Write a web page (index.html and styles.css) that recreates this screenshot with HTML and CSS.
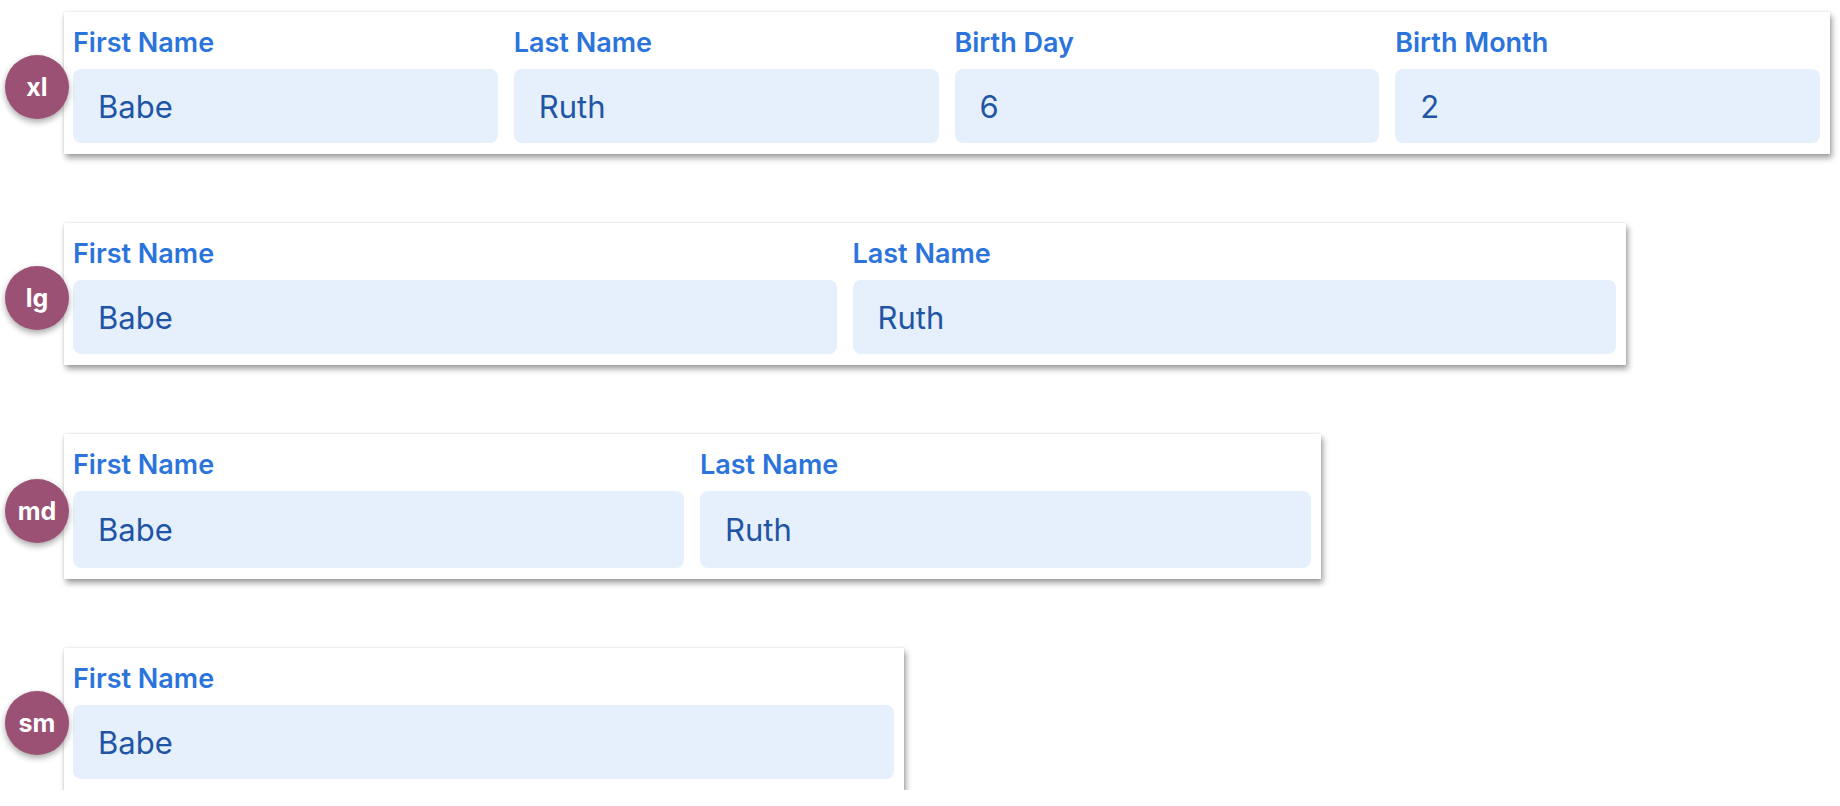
FILE: index.html
```html
<!DOCTYPE html>
<html lang="en">
<head>
<meta charset="utf-8">
<title>Responsive form</title>
<link rel="stylesheet" href="styles.css">
</head>
<body>
<main class="page">
  <section class="row">
    <span class="badge">xl</span>
    <div class="card card-xl">
      <div class="field"><span class="label">First Name</span><div class="input">Babe</div></div>
      <div class="field"><span class="label">Last Name</span><div class="input">Ruth</div></div>
      <div class="field"><span class="label">Birth Day</span><div class="input">6</div></div>
      <div class="field"><span class="label">Birth Month</span><div class="input">2</div></div>
    </div>
  </section>
  <section class="row">
    <span class="badge">lg</span>
    <div class="card card-lg">
      <div class="field"><span class="label">First Name</span><div class="input">Babe</div></div>
      <div class="field"><span class="label">Last Name</span><div class="input">Ruth</div></div>
    </div>
  </section>
  <section class="row">
    <span class="badge">md</span>
    <div class="card card-md">
      <div class="field"><span class="label">First Name</span><div class="input">Babe</div></div>
      <div class="field"><span class="label">Last Name</span><div class="input">Ruth</div></div>
    </div>
  </section>
  <section class="row">
    <span class="badge">sm</span>
    <div class="card card-sm">
      <div class="field"><span class="label">First Name</span><div class="input">Babe</div></div>
    </div>
  </section>
</main>
</body>
</html>
```
FILE: styles.css
```css
* { box-sizing: border-box; }

html, body {
  margin: 0;
  padding: 0;
  background: #ffffff;
}

body {
  font-family: Inter, "Liberation Sans", Arial, sans-serif;
}

.page {
  display: flex;
  flex-direction: column;
  gap: 69px;
  padding: 12px 0 0 5px;
}

.row {
  display: flex;
  align-items: center;
}

.badge {
  position: relative;
  z-index: 1;
  flex: none;
  width: 64px;
  height: 64px;
  margin-right: -5px;
  margin-top: 8px;
  border-radius: 50%;
  background: #9b5174;
  color: #ffffff;
  font-weight: 700;
  font-size: 25px;
  display: flex;
  align-items: center;
  justify-content: center;
  box-shadow: 0 3px 6px rgba(0, 0, 0, 0.35);
}

.card {
  flex: none;
  display: grid;
  column-gap: 16px;
  padding: 16px 10px 11px 9px;
  background: #ffffff;
  box-shadow: 0 0 2px rgba(0, 0, 0, 0.12), 2px 4px 6px rgba(0, 0, 0, 0.38);
}

.card-xl { width: 1766px; grid-template-columns: repeat(4, 1fr); }
.card-lg { width: 1562px; grid-template-columns: repeat(2, 1fr); }
.card-md { width: 1257px; grid-template-columns: repeat(2, 1fr); }
.card-sm { width: 840px; grid-template-columns: 1fr; }

.card-md .input { height: 77px; }

.field {
  display: flex;
  flex-direction: column;
}

.label {
  display: block;
  font-size: 27px;
  font-weight: 600;
  line-height: 30px;
  color: #2b74db;
  margin-bottom: 11px;
}

.input {
  height: 74px;
  display: flex;
  align-items: center;
  padding-left: 25px;
  border-radius: 8px;
  background: #e6f0fc;
  color: #1f55a4;
  font-size: 31px;
  font-weight: 400;
}
```
